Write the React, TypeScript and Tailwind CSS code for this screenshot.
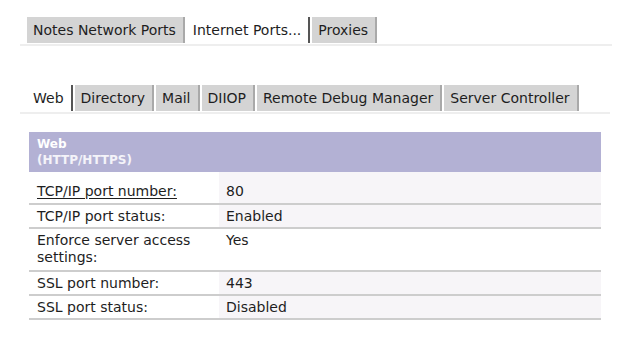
import React from "react";

type TabProps = {
  label: string;
  active?: boolean;
};

const Tab: React.FC<TabProps> = ({ label, active }) => (
  <div
    className={
      active
        ? "h-[26px] pl-[6px] pr-[7px] flex items-center bg-white border-r-2 border-[#555555] mr-[2px] text-[#1e1e1e]"
        : "h-[26px] pl-[6px] pr-[7px] flex items-center bg-[#d4d4d4] border-r-2 border-[#a9a9a9] mr-[2px] text-[#1e1e1e]"
    }
  >
    {label}
  </div>
);

type Row = {
  label: string;
  value: string;
  link?: boolean;
  shaded: boolean;
  pad: string;
};

const rows: Row[] = [
  { label: "TCP/IP port number:", value: "80", link: true, shaded: true, pad: "pt-[11px] pb-[3px]" },
  { label: "TCP/IP port status:", value: "Enabled", shaded: true, pad: "pt-[3px] pb-[2px]" },
  { label: "Enforce server access settings:", value: "Yes", shaded: false, pad: "pt-[3px] pb-[4px]" },
  { label: "SSL port number:", value: "443", shaded: true, pad: "pt-[3px] pb-[2px]" },
  { label: "SSL port status:", value: "Disabled", shaded: true, pad: "pt-[3px] pb-[2px]" },
];

export default function App() {
  return (
    <div
      className="w-[619px] h-[348px] bg-white pl-[20px] pt-[17px] text-[14px] leading-[17px]"
      style={{ fontFamily: '"DejaVu Sans", Verdana, sans-serif' }}
    >
      {/* outer tabs */}
      <div className="flex pl-[7px]">
        <Tab label="Notes Network Ports" />
        <Tab label="Internet Ports..." active />
        <Tab label="Proxies" />
      </div>
      <div className="w-[592px] h-[2px] mt-[1px] bg-[#eeeeee]" />

      {/* inner tabs */}
      <div className="flex pl-[7px] mt-[39px]">
        <Tab label="Web" active />
        <Tab label="Directory" />
        <Tab label="Mail" />
        <Tab label="DIIOP" />
        <Tab label="Remote Debug Manager" />
        <Tab label="Server Controller" />
      </div>
      <div className="w-[590px] h-[2px] mt-[1px] bg-[#eeeeee]" />

      {/* table */}
      <div className="ml-[9px] mt-[18px] w-[572px]">
        <div className="h-[40px] bg-[#b3b1d4] pl-[8px] pt-[4px] text-[12px] leading-[16px] font-bold text-white">
          <div>Web</div>
          <div className="text-white/85">(HTTP/HTTPS)</div>
        </div>
        {rows.map((row, index) => (
          <div key={index} className="flex border-b-2 border-[#cdcdcd] text-[#1e1e1e]">
            <div className={`w-[190px] pl-[8px] pr-[6px] ${row.pad}`}>
              <span className={row.link ? "underline underline-offset-2" : ""}>{row.label}</span>
            </div>
            <div className={`flex-1 pl-[7px] ${row.pad} ${row.shaded ? "bg-[#f7f5f8]" : "bg-white"}`}>
              {row.value}
            </div>
          </div>
        ))}
      </div>
    </div>
  );
}
